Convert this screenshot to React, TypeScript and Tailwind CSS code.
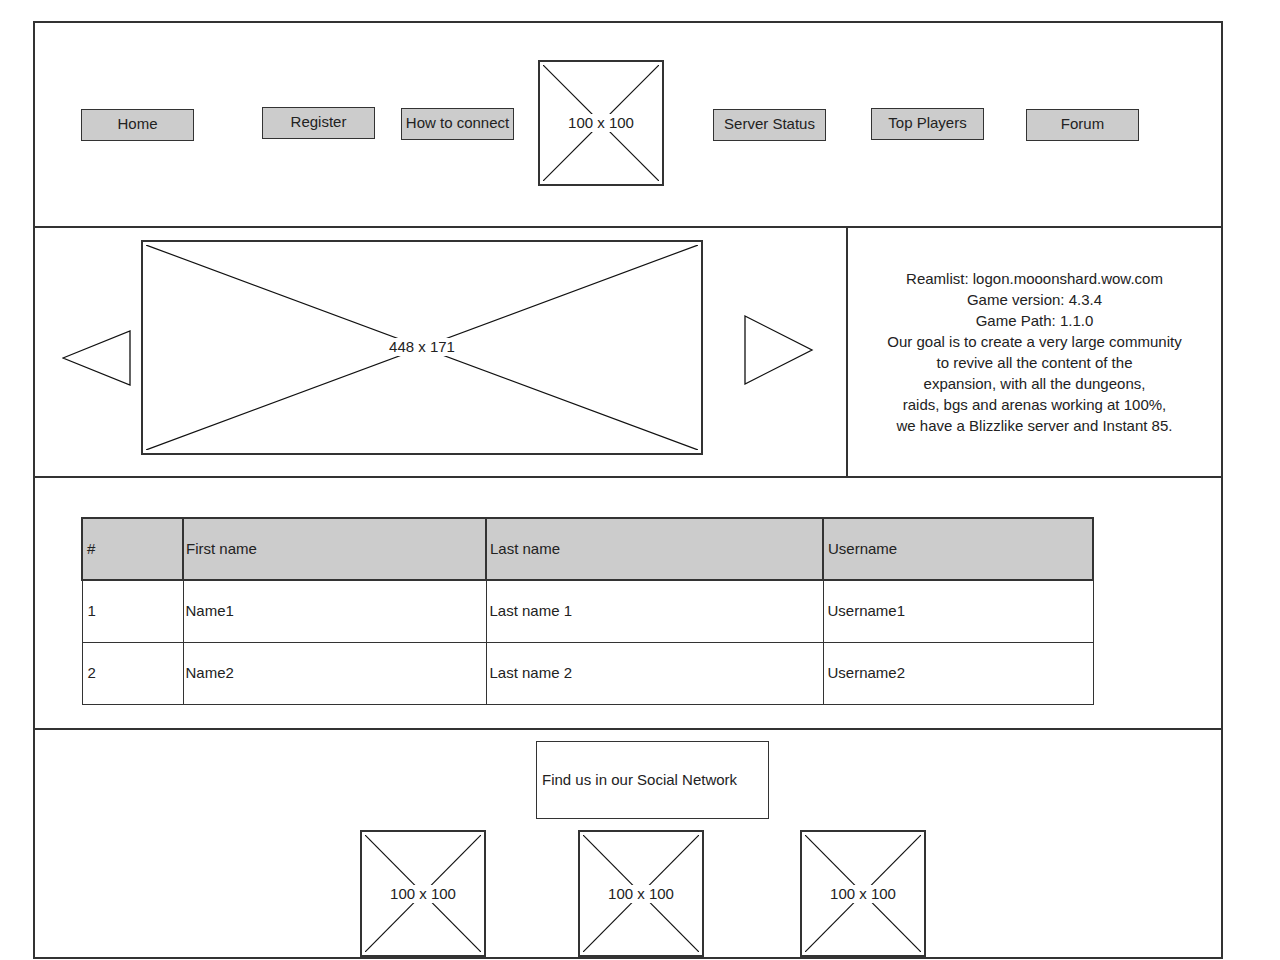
import React from 'react';

const font = { fontFamily: '"Comic Sans MS", "Liberation Sans", sans-serif' };

const Placeholder: React.FC<{ label: string; className?: string }> = ({ label, className }) => (
  <div className={`relative border-2 border-[#333] bg-white ${className ?? ''}`}>
    <div className="absolute inset-[3px]">
      <svg className="h-full w-full" viewBox="0 0 100 100" preserveAspectRatio="none">
        <line x1="0" y1="0" x2="100" y2="100" stroke="#111" strokeWidth="1.2" vectorEffect="non-scaling-stroke" />
        <line x1="100" y1="0" x2="0" y2="100" stroke="#111" strokeWidth="1.2" vectorEffect="non-scaling-stroke" />
      </svg>
    </div>
    <div className="absolute inset-0 flex items-center justify-center">
      <span className="bg-white px-[2px] text-[15px] leading-[18px] text-[#222]">{label}</span>
    </div>
  </div>
);

const NavButton: React.FC<{ label: string; className?: string }> = ({ label, className }) => (
  <div
    className={`flex h-[32px] w-[113px] items-center justify-center border border-[#333] bg-[#cccccc] text-[15px] text-[#222] whitespace-nowrap ${className ?? ''}`}
  >
    {label}
  </div>
);

const players = [
  { id: '1', first: 'Name1', last: 'Last name 1', user: 'Username1' },
  { id: '2', first: 'Name2', last: 'Last name 2', user: 'Username2' },
];

const info = [
  'Reamlist: logon.mooonshard.wow.com',
  'Game version: 4.3.4',
  'Game Path: 1.1.0',
  'Our goal is to create a very large community',
  'to revive all the content of the',
  'expansion, with all the dungeons,',
  'raids, bgs and arenas working at 100%,',
  'we have a Blizzlike server and Instant 85.',
];

const App: React.FC = () => {
  return (
    <div className="h-[960px] w-[1280px] overflow-hidden bg-white" style={font}>
      <div className="ml-[33px] mt-[21px] w-[1190px] border-x-2 border-t-2 border-[#333] text-[#222]">
        {/* header / nav */}
        <div className="flex h-[205px] items-center border-b-2 border-[#333] pl-[46px]">
          <NavButton label="Home" />
          <NavButton label="Register" className="ml-[68px] -mt-[4px]" />
          <NavButton label="How to connect" className="ml-[26px] -mt-[2px]" />
          <Placeholder label="100 x 100" className="ml-[24px] h-[126px] w-[126px] -mt-[4px]" />
          <NavButton label="Server Status" className="ml-[49px]" />
          <NavButton label="Top Players" className="ml-[45px] -mt-[2px]" />
          <NavButton label="Forum" className="ml-[42px]" />
        </div>

        {/* hero */}
        <div className="flex h-[250px] border-b-2 border-[#333]">
          <div className="flex w-[813px] items-center border-r-2 border-[#333]">
            <svg width="70" height="56" viewBox="0 0 70 56" className="ml-[27px] mt-[12px]">
              <polygon points="1,28 68,1 68,55" fill="none" stroke="#111" strokeWidth="1.3" />
            </svg>
            <Placeholder label="448 x 171" className="ml-[9px] h-[215px] w-[562px] -mt-[10px]" />
            <svg width="70" height="70" viewBox="0 0 70 70" className="ml-[41px] -mt-[4px]">
              <polygon points="1,1 68,35 1,69" fill="none" stroke="#111" strokeWidth="1.3" />
            </svg>
          </div>
          <div className="flex flex-1 flex-col items-center justify-center text-center text-[15px] leading-[21px]">
            {info.map((line) => (
              <div key={line}>{line}</div>
            ))}
          </div>
        </div>

        {/* players table */}
        <div className="h-[252px] border-b-2 border-[#333] pl-[46px] pt-[39px]">
          <table className="border-collapse text-[15px]">
            <thead>
              <tr className="h-[62px] bg-[#cccccc] text-left">
                <th className="w-[101px] border-2 border-[#333] pl-[4px] font-normal">#</th>
                <th className="w-[303px] border-2 border-[#333] pl-[2px] font-normal">First name</th>
                <th className="w-[337px] border-2 border-[#333] pl-[3px] font-normal">Last name</th>
                <th className="w-[270px] border-2 border-[#333] pl-[4px] font-normal">Username</th>
              </tr>
            </thead>
            <tbody>
              {players.map((p) => (
                <tr key={p.id} className="h-[62px]">
                  <td className="border border-[#333] pl-[5px]">{p.id}</td>
                  <td className="border border-[#333] pl-[2px]">{p.first}</td>
                  <td className="border border-[#333] pl-[3px]">{p.last}</td>
                  <td className="border border-[#333] pl-[4px]">{p.user}</td>
                </tr>
              ))}
            </tbody>
          </table>
        </div>

        {/* footer */}
        <div className="h-[229px] border-b-2 border-[#333] pt-[11px]">
          <div className="ml-[501px] flex h-[78px] w-[233px] items-center border border-[#333] pl-[5px] text-[15px]">
            Find us in our Social Network
          </div>
          <div className="mt-[11px] flex pl-[325px]">
            <Placeholder label="100 x 100" className="h-[127px] w-[126px]" />
            <Placeholder label="100 x 100" className="ml-[92px] h-[127px] w-[126px]" />
            <Placeholder label="100 x 100" className="ml-[96px] h-[127px] w-[126px]" />
          </div>
        </div>
      </div>
    </div>
  );
};

export default App;
